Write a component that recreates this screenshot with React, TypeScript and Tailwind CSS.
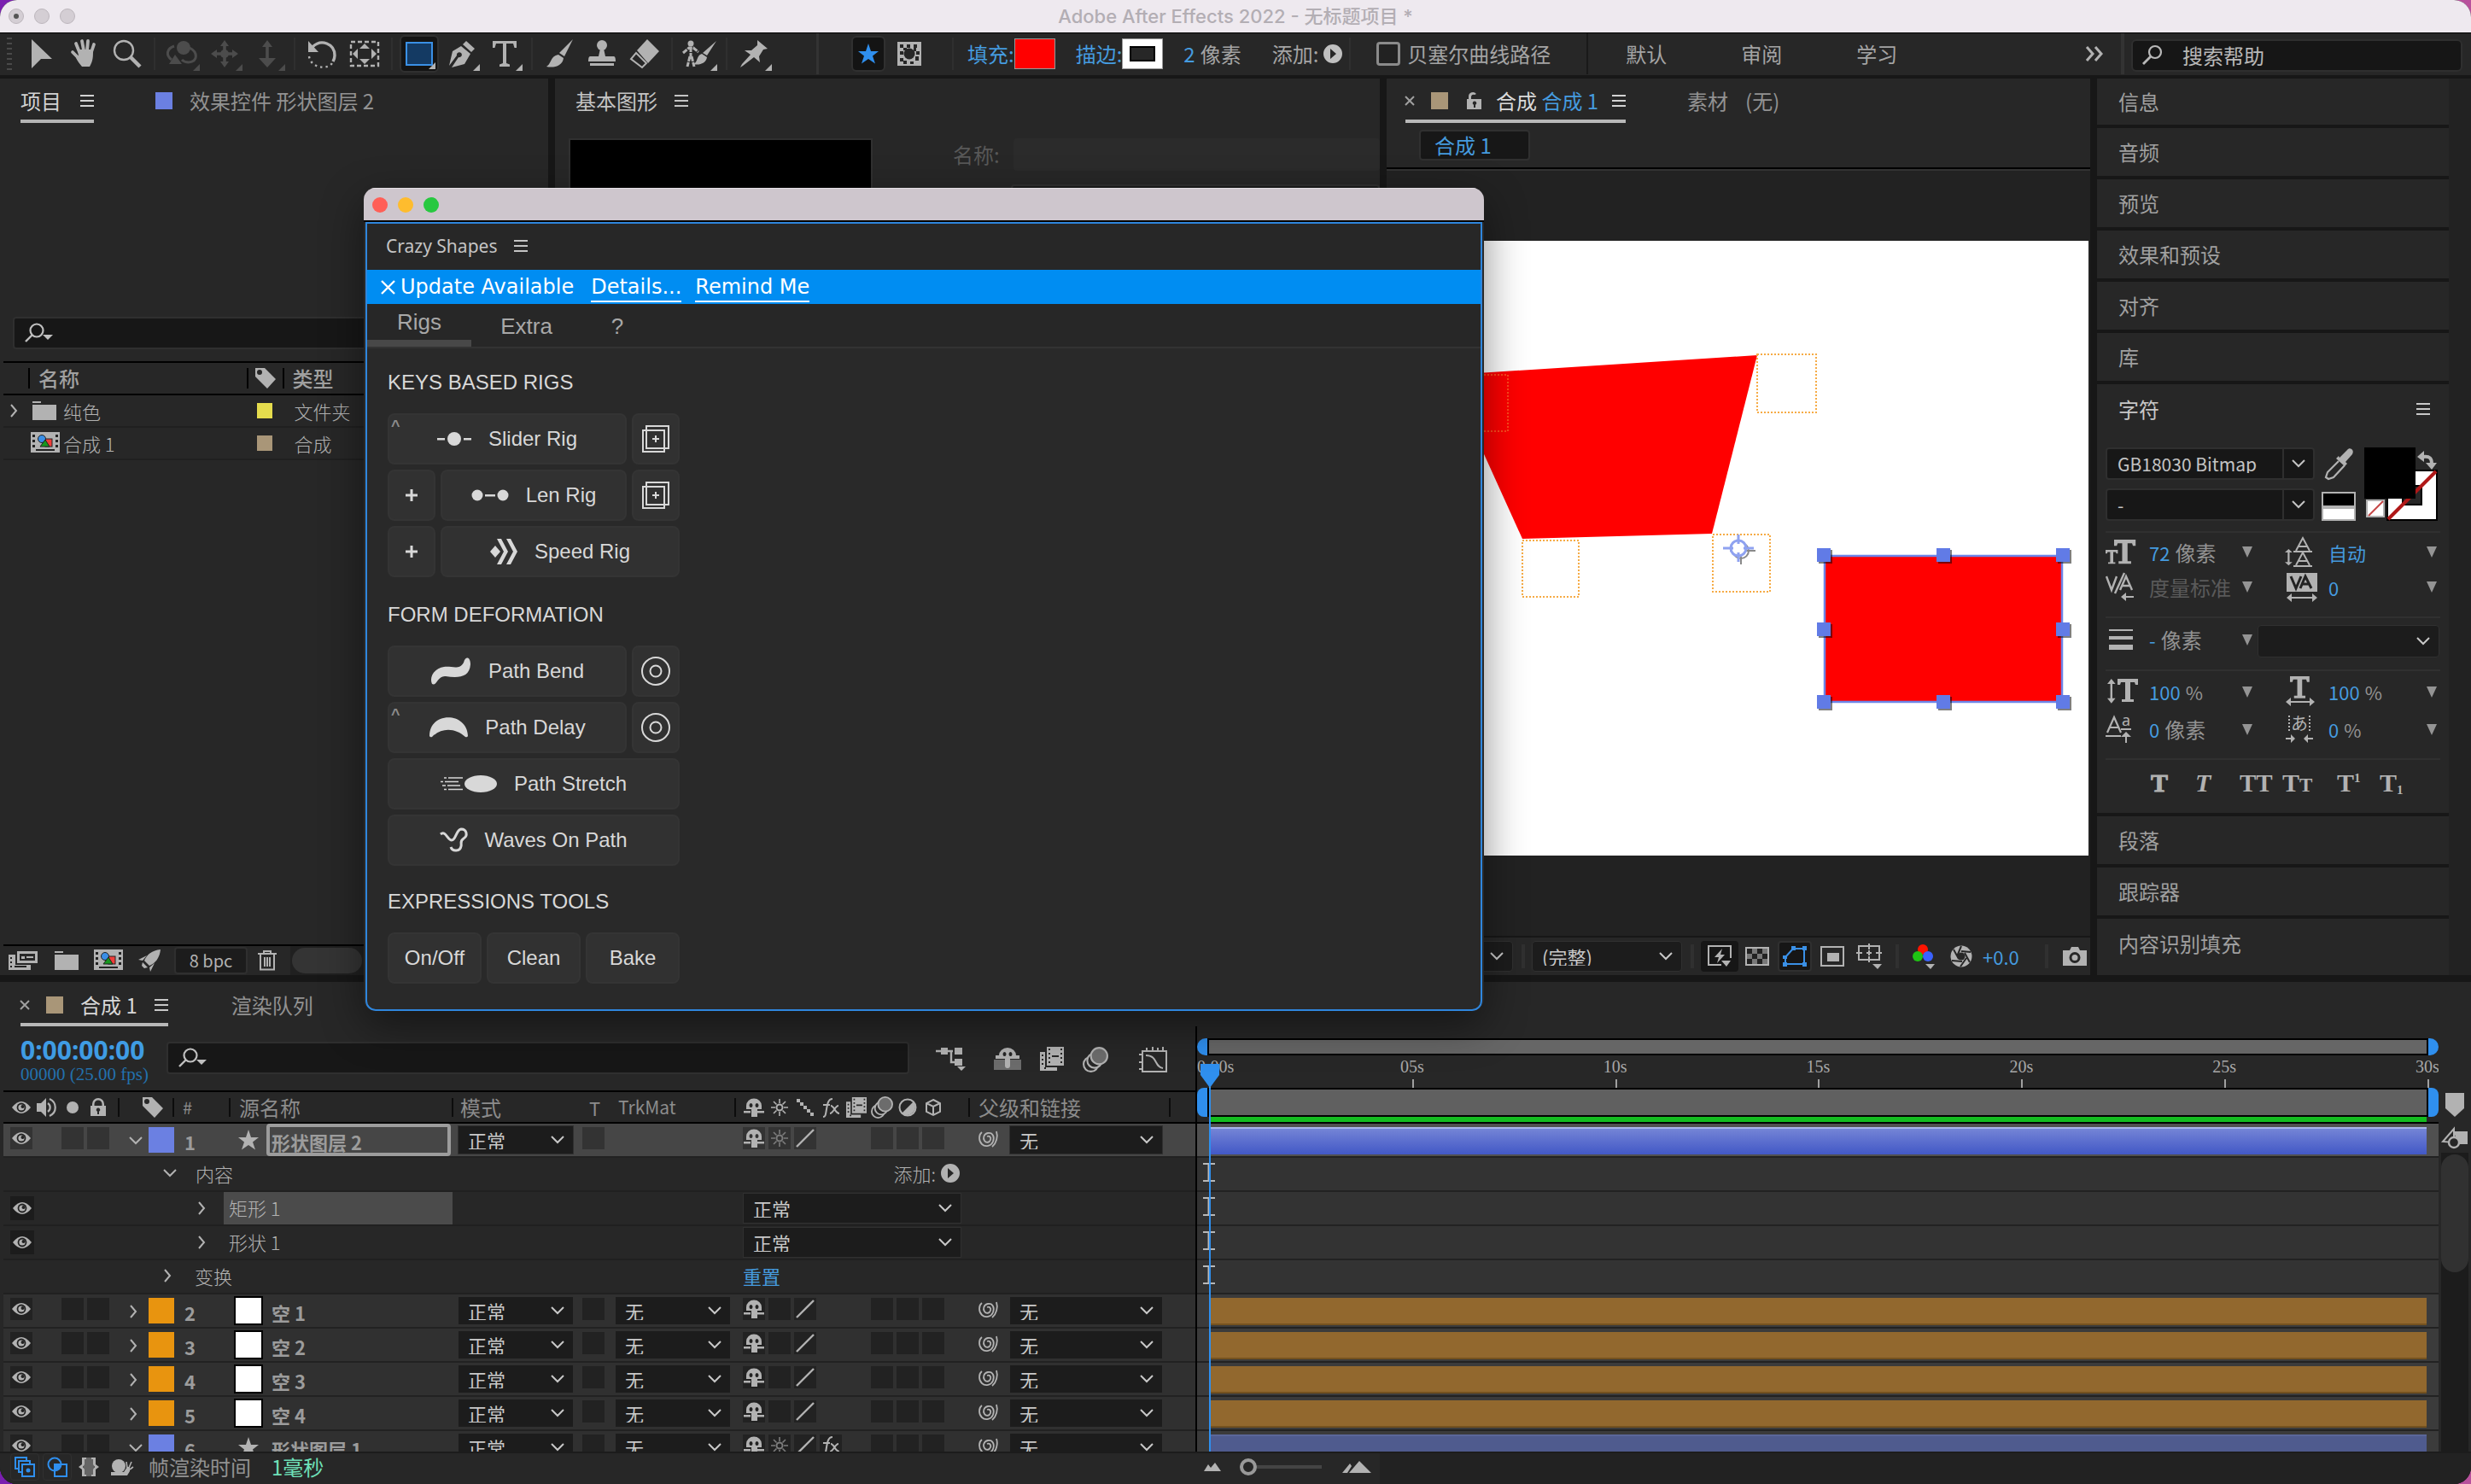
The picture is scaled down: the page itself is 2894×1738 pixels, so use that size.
import React from "react";

type SvgProps = { w: number; h: number; className?: string; children: React.ReactNode };
const Svg = ({ w, h, className = "", children }: SvgProps) => (
  <svg width={w} height={h} viewBox={`0 0 ${w} ${h}`} className={`shrink-0 overflow-visible ${className}`} fill="currentColor" aria-hidden="true">
    {children}
  </svg>
);

/* ---------- shared glyphs ---------- */
const Menu = () => (
  <Svg w={16} h={14}>
    <path d="M0 0h16v2H0zM0 6h16v2H0zM0 12h16v2H0z" />
  </Svg>
);
const Down = ({ className = "" }: { className?: string }) => (
  <Svg w={16} h={10} className={className}>
    <path d="M1 1l7 7 7-7" fill="none" stroke="currentColor" strokeWidth="2" />
  </Svg>
);
const Right = () => (
  <Svg w={8} h={16}>
    <path d="M1 1l6 7-6 7" fill="none" stroke="currentColor" strokeWidth="2" />
  </Svg>
);
const Close = () => (
  <Svg w={10} h={10}>
    <path d="M0 0l10 10M10 0L0 10" stroke="currentColor" strokeWidth="2" />
  </Svg>
);
const Search = () => (
  <Svg w={34} h={24}>
    <circle cx="14" cy="9" r="7.5" fill="none" stroke="currentColor" strokeWidth="2.2" />
    <path d="M9 14L1 22" stroke="currentColor" strokeWidth="2.4" />
    <path d="M21 14h12l-6 6z" />
  </Svg>
);
const Eye = () => (
  <Svg w={22} h={14}>
    <path d="M0 7Q11-7 22 7Q11 21 0 7Z" />
    <circle cx="11" cy="7" r="5.4" fill="#222" />
    <circle cx="11" cy="7" r="3.6" />
    <circle cx="12.5" cy="6" r="2" fill="#222" />
  </Svg>
);
const Tag = () => (
  <Svg w={24} h={24}>
    <path fillRule="evenodd" d="M0 0h11l13 13-10 11L0 10zM5 2a3 3 0 100 6 3 3 0 000-6z" />
  </Svg>
);
const Play = () => (
  <Svg w={22} h={22}>
    <path fillRule="evenodd" d="M11 0a11 11 0 100 22 11 11 0 000-22zM8 5l7 6-7 6z" />
  </Svg>
);
const Star = () => (
  <Svg w={24} h={24}>
    <path d="M12 0l3 9h9l-7 5.500 3 9-8-5.500-8 5.500 3-9L0 9h9z" />
  </Svg>
);
const Shy = () => (
  <Svg w={26} h={24}>
    <path fillRule="evenodd" d="M4 14V10a9 8.500 0 0118 0v4h-5v9h-3.500v-9h-1v9H10v-9zM9.500 7a2 2.500 0 100 5 2 2.500 0 000-5zM16.500 7a2 2.500 0 100 5 2 2.500 0 000-5z" />
    <path d="M1 16h8v2.500H1zM17 16h8v2.500h-8zM10 14h6v9h-6z" />
  </Svg>
);
const Sun = () => (
  <Svg w={20} h={20}>
    <circle cx="10" cy="10" r="3.500" fill="none" stroke="currentColor" strokeWidth="2" />
    <path d="M10 0v5M10 15v5M0 10h5M15 10h5M3 3l3.500 3.500M13.500 13.500L17 17M17 3l-3.500 3.500M6.500 13.500L3 17" stroke="currentColor" strokeWidth="1.600" />
  </Svg>
);
const Slash = () => (
  <Svg w={24} h={24}>
    <path d="M2 22L22 2" stroke="currentColor" strokeWidth="2.400" />
  </Svg>
);
const Fx = () => (
  <Svg w={24} h={24}>
    <path d="M3 23c3 0 3-3 4-9s2-12 7-12M3 9h8M12 10c4 0 5 9 10 9M21 10c-4 0-6 9-10 9" fill="none" stroke="currentColor" strokeWidth="2" />
  </Svg>
);
const Spiral = () => (
  <Svg w={24} h={22}>
    <path d="M11 7c3-1 5 1 4 4s-5 4-7 1-1-8 4-9c6-1 8 5 6 10s-9 7-13 3S1 5 5 2M22 1c2 6 0 14-5 18" fill="none" stroke="currentColor" strokeWidth="1.800" />
  </Svg>
);
const MotionBlur = ({ s = 28 }: { s?: number }) => (
  <svg width={s} height={s} viewBox="0 0 28 28" fill="none" stroke="currentColor" strokeWidth="2" className="shrink-0" aria-hidden="true">
    <circle cx="9" cy="19" r="8" />
    <circle cx="13" cy="15" r="8" fill="#272727" />
    <circle cx="18" cy="10" r="9" fill="#6c6c6c" />
  </svg>
);
const Film = ({ s = 28 }: { s?: number }) => (
  <svg width={s} height={s} viewBox="0 0 28 28" fill="currentColor" className="shrink-0" aria-hidden="true">
    <path fillRule="evenodd" d="M8 0h20v22H8zM10 2v2h2V2zm0 5v2h2V7zm0 5v2h2v-2zm0 5v2h2v-2zM24 2v2h2V2zm0 5v2h2V7zm0 5v2h2v-2zm0 5v2h2v-2zM14 10v2h8v-2z" />
    <path d="M0 6h6v18h14v4H0z" />
    <path d="M2 9h2v2H2zM2 14h2v2H2zM2 19h2v2H2zM5 24h2v2H5z" fill="#272727" />
  </svg>
);
const CompIcon = () => (
  <Svg w={34} h={26}>
    <path d="M0 0h34v24H0z" />
    <path d="M2 3h3v3H2zM2 9h3v3H2zM2 15h3v3H2zM29 3h3v3h-3zM29 9h3v3h-3zM29 15h3v3h-3zM6 20h22v2H6z" fill="#222" />
    <rect x="17" y="8" width="8" height="9" fill="#ef3e3a" stroke="#222" />
    <circle cx="13" cy="8" r="4.500" fill="#3a8ee6" stroke="#222" />
    <path d="M17 9l5 8H11z" fill="#17971f" stroke="#222" />
  </Svg>
);
const Folder = () => (
  <Svg w={28} h={22}>
    <path d="M0 0h10v2H0zM0 4h28v18H0z" />
  </Svg>
);
const Lock = () => (
  <Svg w={18} h={22}>
    <path fillRule="evenodd" d="M0 9h2V7a7 7 0 0114 0v2h2v12H0zM4.500 9h9V7a4.500 4.500 0 00-9 0zM9 11.500a2.200 2.200 0 00-1 4.200V19h2v-3.300a2.200 2.200 0 00-1-4.200z" />
  </Svg>
);
const Checker = () => (
  <Svg w={28} h={22}>
    <rect x="1" y="1" width="26" height="20" fill="#222" stroke="currentColor" strokeWidth="2" />
    <path d="M8 2h6v6H8zM20 2h6v6h-6zM2 8h6v6H2zM14 8h6v6h-6zM8 14h6v6H8zM20 14h6v6h-6z" opacity=".6" />
  </Svg>
);

/* ---------- small building blocks ---------- */
const Pick = ({ label, value, className = "" }: { label: string; value: string; className?: string }) => (
  <div className={`relative shrink-0 border border-[#303030] bg-[#1c1c1c] text-[#c8c8c8] ${className}`}>
    <select aria-label={label} className="h-full w-full appearance-none bg-transparent pl-[11px] text-[22px] outline-none">
      <option>{value}</option>
    </select>
    <Down className="pointer-events-none absolute right-2.5 top-1/2 -translate-y-1/2" />
  </div>
);

const Tool = ({ name, dim, corner, active, children }: { name: string; dim?: boolean; corner?: boolean; active?: boolean; children: React.ReactNode }) => (
  <button
    aria-label={name}
    className={`relative flex h-11 w-[46px] mx-0.5 shrink-0 items-center justify-center rounded-md ${dim ? "text-[#4c4c4c]" : "text-[#b2b2b2]"} ${active ? "border-2 border-[#303030] bg-[#141414]" : ""}`}
  >
    {children}
    {corner && (
      <Svg w={8} h={8} className="absolute bottom-0.5 right-0.5">
        <path d="M8 0v8H0z" />
      </Svg>
    )}
  </button>
);
const ToolSep = () => <span className="mx-1.5 h-[38px] w-[2px] shrink-0 bg-[#2f2f2f]" />;

function Toolbar() {
  return (
    <div className="flex h-[50px] shrink-0 items-center border-t border-black bg-[#272727] pb-0.5 text-[24px] text-[#a4a4a4]">
      <Svg w={8} h={38} className="ml-2 mr-2 text-[#4a4a4a]">
        <path d="M0 0h6v2H0zM0 6h6v2H0zM0 12h6v2H0zM0 18h6v2H0zM0 24h6v2H0zM0 30h6v2H0zM0 36h6v2H0z" />
      </Svg>
      <Tool name="选取工具">
        <Svg w={24} h={34}>
          <path d="M0 0l24 23H11L0 34z" />
        </Svg>
      </Tool>
      <Tool name="手形工具">
        <Svg w={32} h={34}>
          <path d="M10 15L6 5M15 13L13 2M19 13l1-11M24 15l3-9M9 22L2 15" stroke="currentColor" strokeWidth="3.800" strokeLinecap="round" />
          <path d="M8 12h18c0 9 0 13-4 20H13C10 28 6 24 5 18l4 2z" />
        </Svg>
      </Tool>
      <Tool name="缩放工具">
        <Svg w={34} h={34}>
          <circle cx="13" cy="13" r="11" fill="none" stroke="currentColor" strokeWidth="2.400" />
          <path d="M21 21l11 11" stroke="currentColor" strokeWidth="4.500" />
        </Svg>
      </Tool>
      <ToolSep />
      <Tool name="绕光标旋转工具" dim corner>
        <Svg w={38} h={32}>
          <circle cx="21" cy="9" r="8" />
          <path d="M10 7C1 10 0 18 7 23M28 9c10 5 10 16-1 17M27 26c-3 0-6-1-8-3" fill="none" stroke="currentColor" strokeWidth="3" />
          <path d="M11 17l8 11H4z" />
        </Svg>
      </Tool>
      <Tool name="在光标下移动工具" dim corner>
        <Svg w={32} h={32}>
          <path d="M16 4v24M4 16h24" stroke="currentColor" strokeWidth="3.600" />
          <path d="M16 0l5 7H11zM16 32l5-7H11zM0 16l7-5v10zM32 16l-7-5v10z" />
          <circle cx="16" cy="16" r="5" />
        </Svg>
      </Tool>
      <Tool name="向光标方向推拉镜头工具" dim corner>
        <Svg w={20} h={32}>
          <path d="M10 4v20" stroke="currentColor" strokeWidth="3.600" />
          <path d="M10 0l6 8H4zM10 32l10-11H0z" />
        </Svg>
      </Tool>
      <ToolSep />
      <Tool name="旋转工具">
        <Svg w={34} h={34}>
          <path d="M6 9c10-10 26-4 26 10 0 3-1 5-2 7" fill="none" stroke="currentColor" strokeWidth="3.400" />
          <path d="M1 2v13h12z" />
          <path d="M2 20c2 14 22 16 27 8" fill="none" stroke="currentColor" strokeWidth="2.400" strokeDasharray="2.400 4" />
        </Svg>
      </Tool>
      <Tool name="向后平移(锚点)工具">
        <Svg w={34} h={30}>
          <rect x="1" y="1" width="32" height="28" fill="none" stroke="currentColor" strokeWidth="2.400" strokeDasharray="5 3" />
          <path d="M17 3l6 6H11zM17 27l6-6H11zM3 15l6-6v12zM31 15l-6-6v12z" />
        </Svg>
      </Tool>
      <ToolSep />
      <Tool name="矩形工具" corner active>
        <Svg w={32} h={28}>
          <rect x="1" y="1" width="30" height="26" fill="#143a63" stroke="#3a90e6" strokeWidth="2" />
        </Svg>
      </Tool>
      <Tool name="钢笔工具" corner>
        <Svg w={32} h={34}>
          <path d="M21 2l10 9-4 4-10-9zM15 8l11 9-7 12L4 33l8-12a3 3 0 10-2-2L1 31 5 14z" />
        </Svg>
      </Tool>
      <Tool name="横排文字工具" corner>
        <Svg w={28} h={30}>
          <path d="M0 0h28v8h-2.500L24 3h-8v23l4 1.500V30H8v-2.500l4-1.500V3H4L2.500 8H0z" />
        </Svg>
      </Tool>
      <ToolSep />
      <Tool name="画笔工具">
        <Svg w={34} h={34}>
          <path d="M33 0l-10 20-6-4zM16 18l6 4c-1 9-11 12-20 10 6-3 4-12 14-14z" />
        </Svg>
      </Tool>
      <Tool name="仿制图章工具">
        <Svg w={32} h={32}>
          <circle cx="16" cy="6" r="6" />
          <path d="M14 10h4l2 9h10q2 0 2 6H0q0-6 2-6h10zM2 27h28v3H2z" />
        </Svg>
      </Tool>
      <Tool name="橡皮擦工具">
        <Svg w={36} h={34}>
          <path d="M21 0l14 14-13 14L9 13z" />
          <path d="M8 16l12 12-5 5-13-10z" fill="none" stroke="currentColor" strokeWidth="2" />
        </Svg>
      </Tool>
      <ToolSep />
      <Tool name="Roto 笔刷工具" corner>
        <Svg w={40} h={32}>
          <circle cx="10" cy="4" r="3.500" />
          <path d="M10 8v11M1 15l7-6h5l6 5M9 19L6 31M11 19l3 12" fill="none" stroke="currentColor" strokeWidth="3" strokeDasharray="6 1" />
          <path d="M40 1L29 18l-5-3zM23 16l6 4c-1 7-9 10-16 8 6-2 3-10 10-12z" />
        </Svg>
      </Tool>
      <ToolSep />
      <Tool name="人偶位置控点工具" corner>
        <Svg w={32} h={32}>
          <path d="M20 0l12 10-5 1-5 8 1 7-7-6L3 30l-3 2 2-4 10-11-7-5 8 0 7-6z" />
        </Svg>
      </Tool>
      <span className="ml-12 mr-[38px] h-12 w-[3px] bg-[#333]" />
      <button aria-label="工具创建形状" className="flex h-[42px] w-[40px] items-center justify-center rounded-md border-2 border-[#303030] bg-[#141414] text-[#2f8fee]">
        <Star />
      </button>
      <button aria-label="工具创建蒙版" className="ml-3.5 text-[#b2b2b2]">
        <Svg w={28} h={28}>
          <path d="M0 0h28v28H0z" />
          <path d="M3 3h4v4H3zM11 3h4v4h-4zM19 3h4v4h-4zM7 7h4v3H7zM19 7h3v4h-3zM3 11h4v4H3zM22 11h4v4h-4zM3 19h4v4H3zM21 17h4v5h-4zM7 22h4v4H7zM15 23h4v3h-4z" fill="#272727" />
          <circle cx="14" cy="14" r="6.500" fill="#272727" />
        </Svg>
      </button>
      <span className="ml-9 mr-4 h-[38px] w-[2px] bg-[#2f2f2f]" />
      <a href="#fill" className="text-[#459bdf]">填充:</a>
      <button aria-label="填充颜色" className="h-9 w-12 border border-[#999] bg-[#ff0000]" />
      <a href="#stroke" className="ml-6 text-[#459bdf]">描边:</a>
      <button aria-label="描边颜色" className="flex h-9 w-12 items-center justify-center border border-[#999] bg-white">
        <span className="h-[18px] w-[30px] border-2 border-black bg-[#272727]" />
      </button>
      <span className="ml-6 text-[#459bdf]">2</span>
      <span className="ml-1.5">像素</span>
      <button className="ml-9 flex items-center gap-1.5">
        添加:
        <span className="text-[#c0c0c0]">
          <Play />
        </span>
      </button>
      <span className="ml-2 mr-[30px] h-[38px] w-[2px] bg-[#2f2f2f]" />
      <label className="flex items-center gap-2">
        <input type="checkbox" className="h-7 w-7 appearance-none rounded border-[3px] border-[#8b8b8b] bg-[#222]" />
        贝塞尔曲线路径
      </label>
      <span className="ml-[42px] h-12 w-[2px] bg-[#191919]" />
      <nav className="ml-[44px] flex gap-[87px]">
        <button>默认</button>
        <button>审阅</button>
        <button>学习</button>
      </nav>
      <button aria-label="更多工作区" className="ml-auto mr-5 text-[#b2b2b2]">
        <Svg w={22} h={16}>
          <path d="M2 0l7 8-7 8M12 0l7 8-7 8" fill="none" stroke="currentColor" strokeWidth="3" />
        </Svg>
      </button>
      <span className="mr-2 h-12 w-1 bg-[#333]" />
      <label className="mr-2.5 mt-1 flex h-[38px] w-[388px] items-center rounded-md border-2 border-[#2f2f2f] bg-[#161616] text-[#b8b8b8]">
        <Svg w={26} h={24} className="ml-2.5 mr-[22px]">
          <circle cx="16" cy="8" r="7" fill="none" stroke="currentColor" strokeWidth="2.200" />
          <path d="M11 13L2 22" stroke="currentColor" strokeWidth="2.800" />
        </Svg>
        <input aria-label="搜索帮助" placeholder="搜索帮助" className="min-w-0 flex-1 bg-transparent outline-none placeholder:text-[#b8b8b8]" />
      </label>
    </div>
  );
}

function ProjectPanel() {
  return (
    <section className="flex min-w-0 flex-col bg-[#272727]">
      <div className="flex">
        <button className="ml-6 flex h-[52px] items-center gap-[22px] border-b-4 border-[#b4b4b4] pt-1 text-[#d2d2d2]">
          项目
          <Menu />
        </button>
        <button className="ml-[72px] flex h-[52px] items-center gap-5 text-[#929292]">
          <span className="h-5 w-5 bg-[#6b80e2]" />
          效果控件 形状图层 2
        </button>
      </div>
      <label className="mx-[15px] mt-[227px] flex h-[38px] items-center rounded border-2 border-[#2f2f2f] bg-[#171717] text-[#c0c0c0]">
        <span className="ml-3">
          <Search />
        </span>
        <input aria-label="搜索项目" className="min-w-0 flex-1 bg-transparent outline-none" />
      </label>
      <table className="ml-1 mt-3.5 table-fixed border-collapse text-left text-[#a0a0a0]">
        <colgroup>
          <col className="w-[284px]" />
          <col className="w-[41px]" />
          <col className="w-[310px]" />
        </colgroup>
        <thead>
          <tr className="h-[38px] border-y-2 border-black">
            <th className="p-0 font-medium">
              <div className="ml-[29px] border-l-2 border-black pl-2.5 leading-[24px]">名称</div>
            </th>
            <th className="p-0 text-[#b2b2b2]">
              <div className="border-l-2 border-black pl-2">
                <Tag />
              </div>
            </th>
            <th className="p-0 font-medium">
              <div className="border-l-2 border-black pl-2.5 leading-[24px]">类型</div>
            </th>
          </tr>
        </thead>
        <tbody className="text-[22px] font-light">
          <tr className="h-[38px] border-b-2 border-[#202020]">
            <td className="p-0">
              <div className="flex items-center text-[#b2b2b2]">
                <span className="ml-2 mr-[18px]">
                  <Right />
                </span>
                <Folder />
                <span className="ml-2">纯色</span>
              </div>
            </td>
            <td className="p-0">
              <div className="ml-3 h-[18px] w-[18px] bg-[#e5dc4d]" />
            </td>
            <td className="p-0 pl-3.5 text-[#b2b2b2]">文件夹</td>
          </tr>
          <tr className="h-[38px] border-b-2 border-[#202020]">
            <td className="p-0">
              <div className="flex items-center text-[#b2b2b2]">
                <span className="ml-8 mr-1">
                  <CompIcon />
                </span>
                <span>合成 1</span>
              </div>
            </td>
            <td className="p-0">
              <div className="ml-3 h-[18px] w-[18px] bg-[#a99678]" />
            </td>
            <td className="p-0 pl-3.5 text-[#b2b2b2]">合成</td>
          </tr>
        </tbody>
      </table>
      <div className="ml-1 mt-auto flex h-9 items-center border-t-2 border-black text-[#b2b2b2]">
        <button aria-label="解释素材" className="ml-1.5">
          <Svg w={34} h={22}>
            <path fillRule="evenodd" d="M10 0h24v14H10zM13 3v8h18V3z" />
            <path d="M15 6h4v3h-4zM21 6h8v2h-8zM0 4h8v12h18v6H0z" />
            <path d="M2 7h2v2H2zM2 12h2v2H2zM2 17h2v2H2zM7 17h14v2H7z" fill="#222" />
          </Svg>
        </button>
        <button aria-label="新建文件夹" className="ml-5">
          <Folder />
        </button>
        <button aria-label="新建合成" className="ml-[18px]">
          <CompIcon />
        </button>
        <button aria-label="项目设置" className="ml-[18px]">
          <Svg w={26} h={26}>
            <path d="M26 0C16 1 10 6 7 13l6 6C20 16 25 10 26 0zM10 7L0 12l5 1zM19 16l-5 10-1-5zM5 15l6 6-4 1-3-3z" />
          </Svg>
        </button>
        <button className="ml-4 h-8 w-[86px] rounded border-2 border-[#2f2f2f] bg-[#1c1c1c] text-[20px] leading-none">8 bpc</button>
        <button aria-label="删除" className="ml-3">
          <Svg w={22} h={24}>
            <path d="M0 4h22M7 4V1h8v3M3 4v18.500h16V4M8 8v11M11 8v11M14 8v11" fill="none" stroke="currentColor" strokeWidth="2" />
          </Svg>
        </button>
        <div className="ml-4 flex h-full flex-1 items-center bg-[#202020] pl-0.5">
          <span className="h-[30px] w-[82px] rounded-full bg-[#343434]" />
        </div>
      </div>
    </section>
  );
}

function GraphicsPanel() {
  return (
    <section className="min-w-0 bg-[#272727]">
      <button className="ml-6 flex h-[52px] items-center gap-5 text-[#c4c4c4]">
        基本图形
        <Menu />
      </button>
      <div className="flex pl-4 pt-[18px]">
        <div className="h-[200px] w-[356px] border-2 border-[#303030] bg-black" />
        <div className="ml-[94px] flex-1">
          <label className="flex h-[38px] items-center gap-4 text-[#585858]">
            名称:
            <input className="h-full min-w-0 flex-1 rounded bg-[#2b2b2b]" />
          </label>
          <div className="ml-[68px] mt-4 h-[38px] rounded border-2 border-[#303030] bg-[#1c1c1c]" />
        </div>
      </div>
    </section>
  );
}

const nullBoxes = [
  [1698, 439, 68, 66],
  [2058, 415, 69, 68],
  [1783, 633, 66, 66],
  [2006, 626, 67, 67],
];

function Viewer() {
  return (
    <svg viewBox="1624 282 822 720" className="block h-[720px] w-full bg-white" preserveAspectRatio="xMaxYMin meet" role="img" aria-label="合成视图">
      <path d="M1700 439L2058 416L2005 625L1783 631L1700 448Z" fill="#ff0000" />
      {nullBoxes.map(([x, y, w, h], i) => (
        <rect key={i} x={x} y={y} width={w} height={h} fill="none" stroke={i === 0 ? "#ff4a1c" : "#f6ab45"} strokeWidth="2" strokeDasharray="2 2" />
      ))}
      <g fill="none" strokeWidth="2">
        <g stroke="#8a8a8a">
          <circle cx="2039" cy="645" r="9" />
          <path d="M2039 633v28M2026 645h30" />
        </g>
        <g stroke="#8fa2f0" strokeWidth="3">
          <circle cx="2036" cy="642" r="9" fill="#fff" />
          <path d="M2036 626v11M2036 647v11M2018 642h12M2042 642h12" />
        </g>
      </g>
      <rect x="2137" y="651" width="278" height="171" fill="#ff0000" stroke="#6d85e8" strokeWidth="2.500" />
      {[650, 737, 822].map((y) =>
        [2136, 2276, 2416].map((x) =>
          x === 2276 && y === 737 ? null : (
            <g key={`${x}-${y}`}>
              <rect x={x - 6} y={y - 6} width="16" height="16" fill="#000" opacity=".5" />
              <rect x={x - 8} y={y - 8} width="16" height="16" fill="#617be6" />
            </g>
          ),
        ),
      )}
    </svg>
  );
}

function CompPanel() {
  return (
    <section className="flex min-w-0 flex-col bg-[#272727]">
      <div className="flex">
        <div className="ml-[22px] flex h-[52px] items-center border-b-4 border-[#b8b8b8] pt-1">
          <button aria-label="关闭" className="text-[#a0a0a0]">
            <Close />
          </button>
          <span className="ml-5 h-5 w-5 bg-[#a99678]" />
          <Svg w={18} h={22} className="ml-[22px] text-[#b2b2b2]">
            <path fillRule="evenodd" d="M0 9h2V6a5 5 0 019-3l-2 1a3 3 0 00-4 2v3h12v12H0zM9 11.500a2.200 2.200 0 00-1 4.200V19h2v-3.300a2.200 2.200 0 00-1-4.200z" />
          </Svg>
          <button className="ml-4 text-[#dadada]">
            合成 <span className="text-[#459bdf]">合成 1</span>
          </button>
          <span className="ml-4 text-[#d2d2d2]">
            <Menu />
          </span>
        </div>
        <button className="ml-[72px] flex h-[52px] items-center gap-3 text-[#929292]">
          素材 <span className="pl-2">(无)</span>
        </button>
      </div>
      <div className="flex h-[54px] border-b-2 border-black pl-[38px] pt-2">
        <button className="h-9 w-[130px] rounded border-2 border-[#303030] bg-[#171717] pl-4 text-left leading-none text-[#459bdf]">合成 1</button>
      </div>
      <div className="flex-1 border-t-2 border-[#333] bg-[#222] pr-0.5 pt-[82px]">
        <Viewer />
      </div>
      <div className="flex h-[46px] items-center border-t-2 border-[#171717] text-[#b2b2b2]">
        <Pick label="放大率" value="100%" className="ml-2 h-9 w-[140px] rounded" />
        <span className="ml-2.5 mr-2 h-7 w-1 bg-[#303030]" />
        <Pick label="分辨率" value="(完整)" className="h-9 w-[176px] rounded" />
        <span className="ml-2.5 mr-2 h-7 w-1 bg-[#303030]" />
        <button aria-label="快速预览" className="flex h-9 w-11 items-center justify-center rounded bg-[#161616]">
          <Svg w={28} h={26}>
            <path d="M16 23H1V1h26v14" fill="none" stroke="currentColor" strokeWidth="2" />
            <path d="M17 4L8 14h5l-2 7 9-10h-5zM16 18h11l-5 7z" />
          </Svg>
        </button>
        <button aria-label="切换透明网格" className="ml-2">
          <Checker />
        </button>
        <button aria-label="切换蒙版和形状路径可见性" className="ml-2.5 flex h-9 w-10 items-center justify-center rounded border-2 border-[#303030] bg-[#161616] text-[#3a90e6]">
          <Svg w={28} h={24}>
            <path d="M3 21V13L12 3h13v18z" fill="none" stroke="currentColor" strokeWidth="2" />
            <path d="M0 19h5v5H0zM10 0h5v5h-5zM23 0h5v5h-5zM23 19h5v5h-5zM0 11h5v4H0z" />
          </Svg>
        </button>
        <button aria-label="目标区域" className="ml-2.5">
          <Svg w={28} h={24}>
            <path fillRule="evenodd" d="M0 0h28v24H0zM2 2v20h24V2z" />
            <path d="M8 8h14v10H8z" />
          </Svg>
        </button>
        <button aria-label="网格和参考线选项" className="ml-3.5">
          <Svg w={30} h={30}>
            <path d="M3 3h24v16H3zM15 0v7M15 15v7M0 11h7M23 11h7M12 11h6M15 8v6" fill="none" stroke="currentColor" strokeWidth="2" />
            <path d="M19 24h11l-5 6z" />
          </Svg>
        </button>
        <span className="mx-4 h-7 w-1 bg-[#303030]" />
        <button aria-label="显示通道">
          <Svg w={26} h={30}>
            <circle cx="12" cy="7" r="6" fill="#ff1400" />
            <circle cx="6" cy="15" r="6" fill="#1fc414" />
            <circle cx="18" cy="15" r="6" fill="#3b62ff" />
            <path d="M15 24h11l-5 6z" />
          </Svg>
        </button>
        <button aria-label="重置曝光度" className="ml-[18px]">
          <Svg w={26} h={26}>
            <circle cx="13" cy="13" r="12.500" />
            <path d="M13 1l-5 12M24 8L13 7M23 20L17 9M12 25l7-10M2 18l12 1M4 5l6 11" stroke="#272727" strokeWidth="2" />
            <circle cx="13" cy="13" r="4.500" fill="#272727" />
          </Svg>
        </button>
        <button className="ml-3 text-[22px] text-[#459bdf]">+0.0</button>
        <span className="ml-auto h-7 w-1 bg-[#303030]" />
        <button aria-label="拍摄快照" className="ml-[17px] mr-1">
          <Svg w={28} h={22}>
            <path fillRule="evenodd" d="M8 4l2-4h8l2 4h8v18H0V4zM14 6a6.500 6.500 0 100 13 6.500 6.500 0 000-13zM14 9a3.500 3.500 0 110 7 3.500 3.500 0 010-7z" />
          </Svg>
        </button>
      </div>
    </section>
  );
}

/* ---------- character panel ---------- */
const ArrowV = "M4 0l4 5H5v14h3l-4 5-4-5h3V5H0z";
const CharRow = ({ label, icon, value, unit, mute }: { label: string; icon: React.ReactNode; value?: string; unit?: string; mute?: boolean }) => (
  <div className="flex items-center text-[22px] leading-none">
    <span className="flex w-[51px] justify-start text-[#b2b2b2]">{icon}</span>
    <span className={mute ? "text-[24px] text-[#5a5a5a]" : "text-[#929292]"}>
      {value && <span className="mr-1.5 text-[#459bdf]">{value}</span>}
      <span className={unit && unit.length > 1 ? "text-[24px]" : ""}>{unit}</span>
    </span>
    <button aria-label={label} className="ml-auto text-[#949494]">
      <Svg w={12} h={13}>
        <path d="M0 0h12L6 13z" />
      </Svg>
    </button>
  </div>
);
const BigT = ({ x = 0, y = 0, s = 1 }: { x?: number; y?: number; s?: number }) => (
  <path transform={`translate(${x} ${y}) scale(${s})`} d="M0 0h24v7h-3l-1-3h-5v20h4v3H5v-3h4V4H4L3 7H0z" />
);

const iconText = "Liberation Serif, serif";

function FontPick({ label, value }: { label: string; value: string }) {
  return (
    <div className="relative flex h-[38px] w-[245px] items-center rounded border-2 border-[#2f2f2f] bg-[#171717] text-[#c4c4c4]">
      <select aria-label={label} className="h-full w-full appearance-none bg-transparent pl-3 text-[21px] outline-none">
        <option>{value}</option>
      </select>
      <span className="pointer-events-none absolute inset-y-0 right-0 flex w-9 items-center justify-center border-l-2 border-[#2f2f2f]">
        <Down />
      </span>
    </div>
  );
}

function CharacterPanel() {
  const rule = "border-t-2 border-[#303030]";
  return (
    <div className="bg-[#272727] pl-2.5 pr-2.5">
      <div className="flex h-[60px] items-center justify-between pb-0.5 pl-[15px] pr-3 text-[#c8c8c8]">
        <h2>字符</h2>
        <Menu />
      </div>
      <div className="mt-3.5 flex pb-3">
        <div className="flex flex-col gap-2.5">
          <FontPick label="字体系列" value="GB18030 Bitmap" />
          <FontPick label="字体样式" value="-" />
        </div>
        <div className="ml-2 flex w-10 flex-col items-center justify-between text-[#b2b2b2]">
          <button aria-label="吸管">
            <Svg w={34} h={38}>
              <path d="M18 12l9-9c3-4 9 0 6 5l-8 9 2 2-3 3-10-9 3-3z" />
              <path d="M17 16L4 29l-2 6 3 2 6-2L24 21" fill="none" stroke="currentColor" strokeWidth="2.200" />
            </Svg>
          </button>
          <Svg w={40} h={36}>
            <path d="M0 2h40v34H0z" />
            <path d="M2 4h36v14H2z" fill="#000" />
            <path d="M2 22h36v12H2z" fill="#fff" />
          </Svg>
        </div>
        <Svg w={86} h={86} className="ml-2.5 text-[#b2b2b2]">
          <path d="M26 26h60v60H26z" fill="#000" />
          <path d="M28 28h56v56H28z" fill="#fff" />
          <path d="M44 44h24v24H44z" fill="#000" />
          <path d="M46 46h20v20H46z" fill="#272727" />
          <path d="M28 84L84 28" stroke="#b01818" strokeWidth="4" />
          <path d="M0 0h60v60H0z" fill="#000" />
          <path d="M2 61h22v21H2z" />
          <path d="M4 63h18v17H4z" fill="#fff" />
          <path d="M5 80L22 63" stroke="#c54646" strokeWidth="2" />
          <path d="M69 11c8-1 10 2 10 8" fill="none" stroke="currentColor" strokeWidth="4" />
          <path d="M62 11l8-7v13zM72 18h13l-6 8z" />
        </Svg>
      </div>
      <div className={`grid h-[100px] auto-rows-[41px] grid-cols-[172px_1fr] gap-x-[38px] pr-1 pt-0.5 ${rule}`}>
        <CharRow label="字体大小" value="72" unit="像素" icon={<Svg w={36} h={30}><BigT x={10} y={0} s={1.050} /><BigT x={0} y={12} s={0.600} /></Svg>} />
        <CharRow label="行距" value="自动" icon={<Svg w={34} h={34}><path d="M13 15L21 0l8 15M16 10h10M13 32l8-15 8 15M16 27h10" fill="none" stroke="currentColor" strokeWidth="2" /><path d="M10 15h22v2H10zM10 32h22v2H10z" /><path d={ArrowV} transform="translate(0 13) scale(1.100 .800)" /></Svg>} />
        <CharRow label="字偶间距" mute unit="度量标准" icon={<Svg w={36} h={34}><path d="M1 4l6 16 6-16M11 24L22 0M17 20l7-16 7 16M19 15h10" fill="none" stroke="currentColor" strokeWidth="2.400" /><path d="M18 28l6-5v4h9v2h-9v4z" /></Svg>} />
        <CharRow label="字符间距" value="0" icon={<Svg w={38} h={34}><path d="M2 0h36v22H2z" /><path d="M7 4l6 14 6-14M18 18l6-14 7 14M21 13h8" fill="none" stroke="#222" strokeWidth="3" /><path d="M2 29l6-5v4h24v-4l6 5-6 5v-4H8v4z" /></Svg>} />
      </div>
      <div className={`flex h-[62px] pt-2 ${rule}`}>
        <div className="-mt-0.5 grid h-[38px] w-[172px]">
          <CharRow label="描边宽度" value="-" unit="像素" icon={<Svg w={32} h={24} className="ml-1"><path d="M0 0h28v2H0zM0 8h28v4H0zM0 18h28v6H0z" /></Svg>} />
        </div>
        <Pick label="描边样式" value="" className="ml-1.5 h-[38px] w-[213px] rounded" />
      </div>
      <div className={`grid h-[104px] auto-rows-[44px] grid-cols-[172px_1fr] gap-x-[38px] pr-1 pt-0.5 ${rule}`}>
        <CharRow label="垂直缩放" value="100" unit="%" icon={<Svg w={38} h={30}><path d={ArrowV} transform="translate(2 0) scale(1.200)" /><BigT x={14} y={0} s={1} /></Svg>} />
        <CharRow label="水平缩放" value="100" unit="%" icon={<Svg w={36} h={36}><BigT x={6} y={0} s={0.950} /><path d="M1 30l6-5v4h22v-4l6 5-6 5v-4H7v4z" /></Svg>} />
        <CharRow label="基线偏移" value="0" unit="像素" icon={<Svg w={34} h={32}><path d="M2 20L10 2l8 18M5 14h10" fill="none" stroke="currentColor" strokeWidth="2.200" /><path d="M0 23h18v2H0zM18 15h12v2H18zM24 19l6 6h-5v7h-2v-7h-5z" /><text x="19" y="12" fontSize="18" fontFamily="Noto Sans, sans-serif">a</text></Svg>} />
        <CharRow label="比例间距" value="0" unit="%" icon={<Svg w={34} h={34}><text x="7" y="18" fontSize="20" fontFamily="Noto Sans CJK JP, sans-serif">あ</text><path d="M5 1v20M29 1v20" stroke="currentColor" strokeWidth="2" strokeDasharray="2 2" /><path d="M1 27h6v-4l5 5-5 5v-4H1zM33 27h-6v-4l-5 5 5 5v-4h6z" /></Svg>} />
      </div>
      <div className={`flex h-[64px] items-start pl-[53px] pt-3.5 text-[#b2b2b2] ${rule}`}>
        <button aria-label="仿粗体" className="w-[52px]">
          <Svg w={26} h={28}><text x="0" y="23" fontSize="30" fontWeight="900" stroke="currentColor" strokeWidth="1" fontFamily={iconText}>T</text></Svg>
        </button>
        <button aria-label="仿斜体" className="w-[52px]">
          <Svg w={26} h={28}><text x="0" y="23" fontSize="30" fontWeight="700" fontStyle="italic" fontFamily={iconText}>T</text></Svg>
        </button>
        <button aria-label="全部大写字母" className="w-[50px]">
          <Svg w={40} h={28}><text x="0" y="23" fontSize="29" fontWeight="700" fontFamily={iconText}>TT</text></Svg>
        </button>
        <button aria-label="小型大写字母" className="w-[64px]">
          <Svg w={40} h={28}><text x="0" y="23" fontSize="30" fontWeight="700" fontFamily={iconText}>T<tspan fontSize="23">T</tspan></text></Svg>
        </button>
        <button aria-label="上标" className="w-[50px]">
          <Svg w={34} h={28}><text x="0" y="23" fontSize="30" fontWeight="700" fontFamily={iconText}>T<tspan fontSize="15" dy="-11">1</tspan></text></Svg>
        </button>
        <button aria-label="下标">
          <Svg w={34} h={28}><text x="0" y="23" fontSize="30" fontWeight="700" fontFamily={iconText}>T<tspan fontSize="15" dy="3">1</tspan></text></Svg>
        </button>
      </div>
    </div>
  );
}

const SideItem = ({ name, className = "h-14" }: { name: string; className?: string }) => (
  <button className={`flex shrink-0 items-center bg-[#272727] pl-[25px] text-left text-[#a0a0a0] ${className}`}>{name}</button>
);

function SideColumn() {
  return (
    <aside className="flex bg-[#222]">
      <div className="flex min-w-0 flex-1 flex-col gap-1 bg-[#171717]">
        <SideItem name="信息" className="h-[54px]" />
        {["音频", "预览", "效果和预设", "对齐", "库"].map((n) => (
          <SideItem key={n} name={n} />
        ))}
        <CharacterPanel />
        {["段落", "跟踪器"].map((n) => (
          <SideItem key={n} name={n} />
        ))}
        <SideItem name="内容识别填充" className="flex-1 pb-2" />
      </div>
      <div className="w-[26px]" />
    </aside>
  );
}

/* ---------- floating script window ---------- */
const RigButton = ({ children, caret, className = "" }: { children: React.ReactNode; caret?: boolean; className?: string }) => (
  <button className={`relative flex h-[60px] items-center justify-center rounded-lg border-2 border-[#343434] bg-[#313131] text-[#d8d8d8] ${className}`}>
    {caret && <span className="absolute left-0.5 top-1 text-[18px] font-bold leading-none text-[#8c8c8c]">^</span>}
    {children}
  </button>
);
const Copy = () => (
  <Svg w={34} h={34}>
    <path d="M6 2h26v26H6zM2 7h25v25H2z" fill="none" stroke="currentColor" strokeWidth="2" />
    <path d="M16 13h2v3h3v2h-3v3h-2v-3h-3v-2h3z" />
  </Svg>
);
const Target = () => (
  <Svg w={36} h={36}>
    <circle cx="18" cy="18" r="16" fill="none" stroke="currentColor" strokeWidth="2" />
    <circle cx="18" cy="18" r="6.500" fill="none" stroke="currentColor" strokeWidth="2" />
  </Svg>
);
const Plus = () => (
  <Svg w={14} h={14}>
    <path d="M5.500 0h3v5.500H14v3H8.500V14h-3V8.500H0v-3h5.500z" />
  </Svg>
);

function CrazyShapes() {
  return (
    <div className="absolute left-[426px] top-[220px] flex w-[1312px] flex-col overflow-hidden rounded-[14px] bg-[#292929] font-['Liberation_Sans',sans-serif] shadow-[0_16px_50px_rgba(0,0,0,0.45)]">
      <div className="flex h-[38px] items-center gap-3 border-t border-[#e4dfe4] bg-[#cec6cd] pl-2.5">
        <button aria-label="关闭" className="h-[18px] w-[18px] rounded-full bg-[#ff5f57]" />
        <button aria-label="最小化" className="h-[18px] w-[18px] rounded-full bg-[#febc2e]" />
        <button aria-label="缩放" className="h-[18px] w-[18px] rounded-full bg-[#28c840]" />
      </div>
      <div className="h-[2px] bg-black" />
      <div className="mx-0.5 rounded-b-[12px] border-2 border-[#2f86dd]">
        <div className="flex h-[54px] items-center gap-5 bg-[#272727] pb-0.5 pl-[22px] font-['Noto_Sans',sans-serif] text-[21px] text-[#c4c4c4]">
          Crazy Shapes
          <Menu />
        </div>
        <div className="flex h-10 items-center bg-[#008df2] pl-4 font-['DejaVu_Sans',sans-serif] text-[24px] leading-none text-white">
          <button aria-label="关闭更新提示">
            <Svg w={17} h={17}>
              <path d="M1 1l15 15M16 1L1 16" stroke="currentColor" strokeWidth="2.400" />
            </Svg>
          </button>
          <span className="ml-1.5">Update Available</span>
          <a href="#details" className="ml-5 border-b-2 border-white pb-1 pt-1.5">Details...</a>
          <a href="#remind" className="ml-4 border-b-2 border-white pb-1 pt-1.5">Remind Me</a>
        </div>
        <div className="flex h-[52px] border-b-2 border-[#333] bg-[#272727] text-[26px] text-[#a8a8a8]">
          <button className="w-[122px] border-b-8 border-[#484848]">Rigs</button>
          <button className="w-[129px] pt-0.5">Extra</button>
          <button className="w-[84px] pt-0.5">?</button>
        </div>
        <div className="flex w-[366px] flex-col gap-1.5 pl-6 text-[24px] text-[#d8d8d8]">
          <h3 className="flex h-[70px] items-center pt-2.5">KEYS BASED RIGS</h3>
          <div className="flex gap-1.5">
            <RigButton caret className="flex-1 gap-5">
              <Svg w={40} h={20}>
                <path d="M0 9h9v2.500H0zM31 9h9v2.500h-9z" />
                <circle cx="20" cy="10" r="8" />
              </Svg>
              Slider Rig
            </RigButton>
            <RigButton className="w-14"><Copy /></RigButton>
          </div>
          <div className="flex gap-1.5">
            <RigButton className="w-14"><Plus /></RigButton>
            <RigButton className="flex-1 gap-5">
              <Svg w={44} h={16}>
                <circle cx="7" cy="8" r="6.500" />
                <circle cx="37" cy="8" r="6.500" />
                <path d="M16 7h12v2.500H16z" />
              </Svg>
              Len Rig
            </RigButton>
            <RigButton className="w-14"><Copy /></RigButton>
          </div>
          <div className="flex gap-1.5">
            <RigButton className="w-14"><Plus /></RigButton>
            <RigButton className="flex-1 gap-5">
              <Svg w={32} h={30}>
                <path d="M6 8l6 7-6 7-6-7z" />
                <path d="M8 0h5l8 15-8 15H8l8-15zM19 0h5l8 15-8 15h-5l8-15z" />
              </Svg>
              Speed Rig
            </RigButton>
          </div>
          <h3 className="flex h-[68px] items-center pt-2">FORM DEFORMATION</h3>
          <div className="flex gap-1.5">
            <RigButton className="flex-1 gap-5">
              <Svg w={48} h={32}>
                <path d="M2 31C-2 22 6 12 16 11s18 4 23-5c2-8 8-7 8 2C46 24 32 24 18 22 8 21 8 34 2 31z" />
              </Svg>
              Path Bend
            </RigButton>
            <RigButton className="w-14"><Target /></RigButton>
          </div>
          <div className="flex gap-1.5">
            <RigButton caret className="flex-1 gap-5">
              <Svg w={46} h={24}>
                <path d="M1 22C1-7 45-7 46 22q-1 2-3 1C32 13 16 11 4 23q-2 1-3-1z" />
              </Svg>
              Path Delay
            </RigButton>
            <RigButton className="w-14"><Target /></RigButton>
          </div>
          <RigButton className="gap-5">
            <Svg w={66} h={22}>
              <ellipse cx="47" cy="11" rx="19" ry="10" />
              <path d="M4 4h3M9 4h17M0 8.500h3M5 8.500h16M2 13h4M8 13h15M4 17.500h3M9 17.500h17" stroke="currentColor" strokeWidth="1.500" />
            </Svg>
            Path Stretch
          </RigButton>
          <RigButton className="gap-5">
            <Svg w={32} h={28}>
              <path d="M1 7c6-5 8 7 13 7s5-12 11-13c7 0 8 8 3 11s-2 6-3 9c-1 6-10 7-12 1" fill="none" stroke="currentColor" strokeWidth="3" />
            </Svg>
            Waves On Path
          </RigButton>
          <h3 className="flex h-[66px] items-center pt-1.5">EXPRESSIONS TOOLS</h3>
          <div className="grid grid-cols-3 gap-1.5 pb-[30px]">
            <RigButton>On/Off</RigButton>
            <RigButton>Clean</RigButton>
            <RigButton>Bake</RigButton>
          </div>
        </div>
      </div>
    </div>
  );
}

/* ---------- timeline ---------- */
const Box = ({ tone, children }: { tone: string; children?: React.ReactNode }) => (
  <span className={`flex h-[26px] w-[26px] shrink-0 items-center justify-center ${tone}`}>{children}</span>
);
const Sep = () => <span className="h-[22px] w-[2px] shrink-0 bg-[#0c0c0c]" />;

type Layer = { n: number; name: string; shape?: boolean; selected?: boolean; fx?: boolean };
const LayerRow = ({ n, name, shape, selected, fx }: Layer) => {
  const tone = selected ? "bg-[#333]" : "bg-[#222]";
  return (
    <div className={`flex h-10 shrink-0 items-start border-b-2 border-[#222] pl-2 text-[22px] text-[#b2b2b2] ${selected ? "bg-[#464646]" : "bg-[#303030]"}`}>
      <div className="mt-1 flex w-[134px] gap-1">
        <Box tone={tone}><Eye /></Box>
        <Box tone="" />
        <Box tone={tone} />
        <Box tone={tone} />
      </div>
      <button aria-label={`展开 ${name}`} className={`mt-0.5 flex h-9 w-[26px] items-center ${shape ? "justify-center" : "pl-1.5"}`}>{shape ? <Down /> : <Right />}</button>
      <span className={`ml-0.5 mt-1 h-[30px] w-[30px] ${shape ? "bg-[#6b80e2]" : "bg-[#e8940f]"}`} />
      <span className="w-[66px] pl-3 font-bold leading-[42px] text-[#9c9c9c]">{n}</span>
      <span className="mt-0.5 flex h-[34px] w-[42px] items-center justify-center">
        {shape ? <Star /> : <span className="h-[34px] w-[34px] border-2 border-black bg-white" />}
      </span>
      <span className={`h-[38px] w-[216px] font-bold text-[#9c9c9c] ${selected ? "rounded-sm border-4 border-[#9c9c9c] pl-0.5 leading-[34px]" : "pl-1.5 leading-[42px]"}`}>{name}</span>
      <Pick label={`${name} 模式`} value="正常" className="ml-2 mt-0.5 h-[34px] w-[136px]" />
      <span className="ml-2.5 mt-1"><Box tone={tone} /></span>
      {selected ? <span className="ml-3 w-[136px]" /> : <Pick label={`${name} 轨道遮罩`} value="无" className="ml-3 mt-0.5 h-[34px] w-[136px]" />}
      <div className="ml-3.5 mt-1 flex gap-1">
        <Box tone={tone}><Shy /></Box>
        <Box tone={tone}>{shape && <span className="text-[#7c7c7c]"><Sun /></span>}</Box>
        <Box tone={tone}><Slash /></Box>
        <Box tone={fx ? tone : ""}>{fx && <Fx />}</Box>
        <Box tone="" />
        <Box tone={tone} />
        <Box tone={tone} />
        <Box tone={tone} />
      </div>
      <span className="ml-[38px] mt-2 flex w-[26px] justify-center"><Spiral /></span>
      <Pick label={`${name} 父级`} value="无" className="ml-3 mt-0.5 h-[34px] w-[180px]" />
    </div>
  );
};

const subRow = "flex h-10 shrink-0 items-center border-b-2 border-[#202020] bg-[#272727] pl-2 text-[22px] font-light text-[#b2b2b2]";
const ShapeRow = ({ name, selected }: { name: string; selected?: boolean }) => (
  <div className={subRow}>
    <span className="flex h-7 w-7 items-center justify-center bg-[#1c1c1c]"><Eye /></span>
    <button aria-label={`展开 ${name}`} className="ml-[186px] flex w-5 justify-center"><Right /></button>
    <span className={`ml-4 h-[38px] w-[268px] pl-1.5 leading-[36px] ${selected ? "bg-[#4b4b4b]" : ""}`}>{name}</span>
    <Pick label={`${name} 模式`} value="正常" className="ml-[340px] h-9 w-[256px] font-normal" />
  </div>
);

const layers: Layer[] = [
  { n: 2, name: "空 1" },
  { n: 3, name: "空 2" },
  { n: 4, name: "空 3" },
  { n: 5, name: "空 4" },
];

function TimelineHeader() {
  return (
    <div className="ml-1 flex h-[39px] shrink-0 items-center border-y-2 border-black pl-2 text-[24px] text-[#8c8c8c]">
      <div className="flex w-[126px] gap-1 text-[#b2b2b2]">
        <Box tone=""><Eye /></Box>
        <Box tone="">
          <Svg w={24} h={22}>
            <path d="M0 6h5l6-6v22l-6-6H0z" />
            <path d="M13 6a6 6 0 010 10M15 1c9 4 9 16 0 20" fill="none" stroke="currentColor" strokeWidth="2.200" />
          </Svg>
        </Box>
        <Box tone=""><span className="h-3.5 w-3.5 rounded-full bg-[#b2b2b2]" /></Box>
        <Box tone=""><Lock /></Box>
      </div>
      <Sep />
      <div className="flex w-[62px] pl-[27px] text-[#b2b2b2]"><Tag /></div>
      <Sep />
      <span className="w-16 pl-2.5 text-[20px]">#</span>
      <Sep />
      <span className="w-[259px] pl-2.5">源名称</span>
      <Sep />
      <span className="w-[149px] pl-2">模式</span>
      <span className="w-10 pl-2.5 text-[22px]">T</span>
      <span className="w-[140px] pl-1 text-[21px]">TrkMat</span>
      <Sep />
      <div className="flex w-[272px] gap-1 pl-2 text-[#b2b2b2]">
        <Box tone=""><Shy /></Box>
        <Box tone=""><Sun /></Box>
        <Box tone="">
          <Svg w={20} h={20}>
            <path d="M0 0h4v4H0zM4 4h4v4H4zM8 8h4v4H8zM12 12h4v4h-4zM16 16h4v4h-4z" />
          </Svg>
        </Box>
        <Box tone=""><Fx /></Box>
        <Box tone=""><Film s={24} /></Box>
        <Box tone=""><MotionBlur s={26} /></Box>
        <Box tone="">
          <Svg w={22} h={22}>
            <circle cx="11" cy="11" r="9.500" fill="none" stroke="currentColor" strokeWidth="2" />
            <path d="M18 4A10 10 0 014 18z" />
          </Svg>
        </Box>
        <Box tone="">
          <Svg w={20} h={20}>
            <path d="M10 1l8 4v10l-8 4-8-4V5zM2 5l8 4 8-4M10 9v10" fill="none" stroke="currentColor" strokeWidth="2" />
          </Svg>
        </Box>
      </div>
      <Sep />
      <span className="w-[233px] pl-2.5">父级和链接</span>
      <Sep />
    </div>
  );
}

const lane = "h-10 shrink-0 border-b-2 border-[#222] pl-[15px] pr-3.5";

function Timeline() {
  return (
    <section className="flex h-[588px] shrink-0 flex-col bg-[#272727]">
      <div className="flex">
        <div className="ml-6 flex h-[52px] items-center border-b-4 border-[#b8b8b8] pt-1.5">
          <button aria-label="关闭" className="text-[#a0a0a0]"><Close /></button>
          <span className="ml-5 h-5 w-5 bg-[#a99678]" />
          <button className="ml-5 text-[#d8d8d8]">合成 1</button>
          <span className="ml-5 text-[#c8c8c8]"><Menu /></span>
        </div>
        <button className="ml-[74px] h-[52px] pt-0.5 text-[#929292]">渲染队列</button>
      </div>
      <div className="flex min-h-0 flex-1">
        <div className="flex w-[1402px] shrink-0 flex-col overflow-hidden border-r-2 border-black">
          <div className="flex h-[75px] shrink-0 items-start">
            <div className="w-[171px] shrink-0 pl-6 pt-2.5 text-[#3f9ce4]">
              <div className="whitespace-nowrap font-['Noto_Sans',sans-serif] text-[30px] font-bold leading-[36px]">0:00:00:00</div>
              <div className="whitespace-nowrap font-['Liberation_Serif',serif] text-[21px] leading-[20px] text-[#2371ad]">00000 (25.00 fps)</div>
            </div>
            <label className="ml-6 mt-[18px] flex h-[38px] w-[870px] items-center rounded border-2 border-[#2f2f2f] bg-[#171717] text-[#c0c0c0]">
              <span className="ml-3"><Search /></span>
              <input aria-label="搜索图层" className="min-w-0 flex-1 bg-transparent outline-none" />
            </label>
            <div className="mt-6 flex items-start text-[#b2b2b2]">
              <button aria-label="合成微型流程图" className="ml-[31px]">
                <Svg w={36} h={28}>
                  <path d="M0 5h20M18 5v13h6" fill="none" stroke="currentColor" strokeWidth="2.400" />
                  <path d="M6 1h8v8H6zM22 1h9v8h-9zM22 14h9v8h-9zM25 23h10l-5 5z" />
                </Svg>
              </button>
              <button aria-label="隐藏消隐图层" className="ml-8">
                <Svg w={32} h={28}>
                  <path d="M0 15h32v12H0z" opacity=".5" />
                  <path fillRule="evenodd" d="M6 10a10 9 0 0120 0h4v4H19v8a3 3 0 01-6 0v-8H2v-4zM12.500 6a2 2.500 0 100 5 2 2.500 0 000-5zM19.500 6a2 2.500 0 100 5 2 2.500 0 000-5z" />
                </Svg>
              </button>
              <button aria-label="帧混合" className="ml-[22px]"><Film /></button>
              <button aria-label="运动模糊" className="ml-[22px]"><MotionBlur s={30} /></button>
              <button aria-label="图表编辑器" className="ml-9">
                <Svg w={34} h={32}>
                  <path d="M4 5h28v24H4zM0 9h5M0 18h5M0 26h5M9 1v4M16 0v5M22 1v4M28 0v5M8 10c14 0 10 14 20 15" fill="none" stroke="currentColor" strokeWidth="2" />
                </Svg>
              </button>
            </div>
          </div>
          <TimelineHeader />
          <div className="ml-1 flex min-h-0 flex-1 flex-col overflow-hidden">
            <LayerRow n={1} name="形状图层 2" shape selected />
            <div className={`${subRow} pb-0.5`}>
              <button className="ml-[179px] flex items-center gap-[22px]"><Down />内容</button>
              <button className="ml-auto mr-[276px] flex items-center gap-1.5 font-light">添加:<Play /></button>
            </div>
            <ShapeRow name="矩形 1" selected />
            <ShapeRow name="形状 1" />
            <div className={`${subRow} pb-0.5`}>
              <button className="ml-[180px] flex items-center gap-[28px]"><Right />变换</button>
              <a href="#reset" className="ml-[598px] font-normal text-[#459bdf]">重置</a>
            </div>
            {layers.map((l) => (
              <LayerRow key={l.n} {...l} />
            ))}
            <LayerRow n={6} name="形状图层 1" shape fx />
          </div>
        </div>

        <div className="relative flex min-w-0 flex-1 flex-col overflow-hidden">
          <div className="shrink-0 pt-3.5">
            <div className="flex h-5">
              <span className="h-full w-3 rounded-l-full bg-[#2f8fee]" />
              <span className="flex-1 border-2 border-black bg-[#666]" />
              <span className="h-full w-3 rounded-r-full bg-[#2f8fee]" />
            </div>
            <div className="flex h-[38px] pl-[14px] pr-[13px] font-['Liberation_Serif',serif] text-[20px] text-[#a8a8a8]">
              {["0:00s", "05s", "10s", "15s", "20s", "25s"].map((t, i) => (
                <div key={t} className="flex flex-1 flex-col justify-between">
                  <span className={`self-start leading-[26px] ${i === 0 ? "-translate-x-3.5" : "-translate-x-1/2"}`}>{t}</span>
                  <span className="h-2.5 w-[2px] bg-[#a0a0a0]" />
                </div>
              ))}
              <div className="flex w-0 flex-col justify-between">
                <span className="-translate-x-1/2 self-start leading-[26px]">30s</span>
                <span className="h-2.5 w-[2px] bg-[#a0a0a0]" />
              </div>
            </div>
            <div className="flex h-[34px]">
              <span className="h-full w-3 rounded-l-lg bg-[#2f8fee]" />
              <span className="flex-1 border-2 border-black bg-[#606060]" />
              <span className="h-full w-3 rounded-r-lg bg-[#2f8fee]" />
            </div>
            <div className="h-2 border-b-2 border-black pl-[15px] pr-3.5">
              <div className="h-1.5 bg-[#14bc20]" />
            </div>
          </div>
          <div className="flex min-h-0 flex-1 flex-col overflow-hidden">
            <div className={`${lane} bg-[#505050] pt-1`}>
              <div className="h-8 border-t-2 border-[#a9b5ea] bg-[linear-gradient(#7484d6,#4258c6)]" />
            </div>
            {[0, 1, 2, 3].map((i) => (
              <div key={i} className={`${lane} bg-[#333] pt-1.5`}>
                <Svg w={14} h={22} className="-ml-2 text-[#b8b8b8]">
                  <path d="M0 0h14v2H8.500v18H14v2H0v-2h5.500V2H0z" />
                </Svg>
              </div>
            ))}
            {layers.map((l) => (
              <div key={l.n} className={`${lane} bg-[#3b3b3b] pt-1`}>
                <div className="h-8 border-b-2 border-[#75521f] bg-[#92682e]" />
              </div>
            ))}
            <div className={`${lane} bg-[#3b3b3b] pt-1`}>
              <div className="h-8 border-t-2 border-[#5b6799] bg-[#4f5b8e]" />
            </div>
          </div>
          <div className="pointer-events-none absolute bottom-0 left-[3px] top-11 flex w-6 flex-col items-center text-[#2f8fee]">
            <Svg w={22} h={28}>
              <path d="M0 0h22v13L11 28 0 13z" />
            </Svg>
            <span className="w-[2px] flex-1 bg-[#2f8fee]" />
          </div>
        </div>

        <div className="flex w-[38px] shrink-0 flex-col items-center text-[#b2b2b2]">
          <Svg w={22} h={28} className="mt-[78px]">
            <path d="M0 0h22v18L11 28 0 18z" />
          </Svg>
          <Svg w={30} h={26} className="mt-3">
            <path d="M14 5h16v15H18z" />
            <path d="M1 17L14 2v16z" fill="none" stroke="currentColor" strokeWidth="2" />
            <circle cx="14" cy="18" r="6" fill="#272727" stroke="currentColor" strokeWidth="2.400" />
          </Svg>
          <div className="mt-1 flex w-8 flex-1 bg-[#1c1c1c] pt-0.5">
            <span className="h-[138px] w-full rounded-full bg-[#313131]" />
          </div>
        </div>
      </div>

      <footer className="flex h-[38px] shrink-0 items-center border-t-2 border-[#1c1c1c] bg-[#222]">
        <div className="flex h-full w-[1616px] shrink-0 items-center bg-[#272727] pb-1 text-[#b2b2b2]">
          <button aria-label="展开图层开关" className="ml-3 flex h-8 w-[34px] items-center justify-center rounded border border-[#303030] text-[#2f8fee]">
            <Svg w={24} h={24}>
              <path d="M5 14H1V1h13v4M9 18H5V5h13v4M9 9h14v14H9z" fill="none" stroke="currentColor" strokeWidth="2" />
              <circle cx="16" cy="16" r="2.500" />
            </Svg>
          </button>
          <button aria-label="展开转换控制" className="ml-1 flex h-8 w-[34px] items-center justify-center rounded border border-[#303030] text-[#2f8fee]">
            <Svg w={24} h={24}>
              <circle cx="9" cy="9" r="7.500" fill="none" stroke="currentColor" strokeWidth="2" />
              <path d="M9 9h14v14H9z" fill="none" stroke="currentColor" strokeWidth="2" />
              <path d="M9 9h7a8 8 0 01-7 7z" />
            </Svg>
          </button>
          <button aria-label="展开入点出点" className="ml-2">
            <Svg w={24} h={22}>
              <path d="M6 0h12v22H6z" opacity=".45" />
              <path d="M4 0h5v2H7v6l-2 3 2 3v6h2v2H4v-8l-4-3 4-3zM20 0h-5v2h2v6l2 3-2 3v6h-2v2h5v-8l4-3-4-3z" />
            </Svg>
          </button>
          <button aria-label="渲染时间" className="ml-3.5">
            <Svg w={26} h={20}>
              <circle cx="9" cy="9" r="8" />
              <path d="M0 16h15l4-6h3v5l-3 5H0z" />
              <path d="M19 11l-1-7M21 11l3-7M22 13l4-3" stroke="currentColor" strokeWidth="1.600" />
            </Svg>
          </button>
          <span className="ml-[18px] text-[#929292]">帧渲染时间</span>
          <span className="ml-6 text-[#6fe0b8]">1毫秒</span>
          <Svg w={20} h={10} className="ml-auto">
            <path d="M0 10l5-8 3 4 5-6 7 10z" />
          </Svg>
          <input
            type="range"
            aria-label="时间轴缩放"
            defaultValue={0}
            className="ml-[22px] mr-6 h-5 w-24 appearance-none bg-[linear-gradient(#444,#444)] bg-[length:100%_4px] bg-center bg-no-repeat [&::-webkit-slider-thumb]:h-5 [&::-webkit-slider-thumb]:w-5 [&::-webkit-slider-thumb]:appearance-none [&::-webkit-slider-thumb]:rounded-full [&::-webkit-slider-thumb]:border-4 [&::-webkit-slider-thumb]:border-[#999] [&::-webkit-slider-thumb]:bg-[#272727]"
          />
          <Svg w={34} h={14} className="mr-2.5">
            <path d="M0 14L9 3l2 3-5 8zM8 14L20 0l14 14z" />
          </Svg>
        </div>
      </footer>
    </section>
  );
}

export default function App() {
  return (
    <div className="h-screen bg-[linear-gradient(90deg,#7a1fb0,#b8519c)] font-['Noto_Sans_CJK_SC',sans-serif] text-[24px] leading-none">
      <main className="relative flex h-full flex-col overflow-hidden rounded-[20px] bg-[#171717]">
        <header className="grid h-[38px] shrink-0 grid-cols-[1fr_auto_1fr] items-center bg-[#eee9ef]">
          <div className="flex gap-3 pl-2.5">
            <button aria-label="关闭窗口" className="flex h-[18px] w-[18px] items-center justify-center rounded-full border border-[#bcb6bc] bg-[#d4ced4]">
              <span className="h-1.5 w-1.5 rounded-full bg-[#555]" />
            </button>
            <button aria-label="最小化窗口" className="h-[18px] w-[18px] rounded-full border border-[#bcb6bc] bg-[#d4ced4]" />
            <button aria-label="缩放窗口" className="h-[18px] w-[18px] rounded-full border border-[#bcb6bc] bg-[#d4ced4]" />
          </div>
          <h1 className="font-['Inter','Noto_Sans_CJK_SC',sans-serif] text-[22px] font-medium text-[#b3aeb4]">Adobe After Effects 2022 - 无标题项目 *</h1>
        </header>
        <Toolbar />
        <div className="mb-2 mt-1 grid min-h-0 flex-1 grid-cols-[642fr_966fr_824fr_438fr] gap-2">
          <ProjectPanel />
          <GraphicsPanel />
          <CompPanel />
          <SideColumn />
        </div>
        <Timeline />
        <CrazyShapes />
      </main>
    </div>
  );
}
